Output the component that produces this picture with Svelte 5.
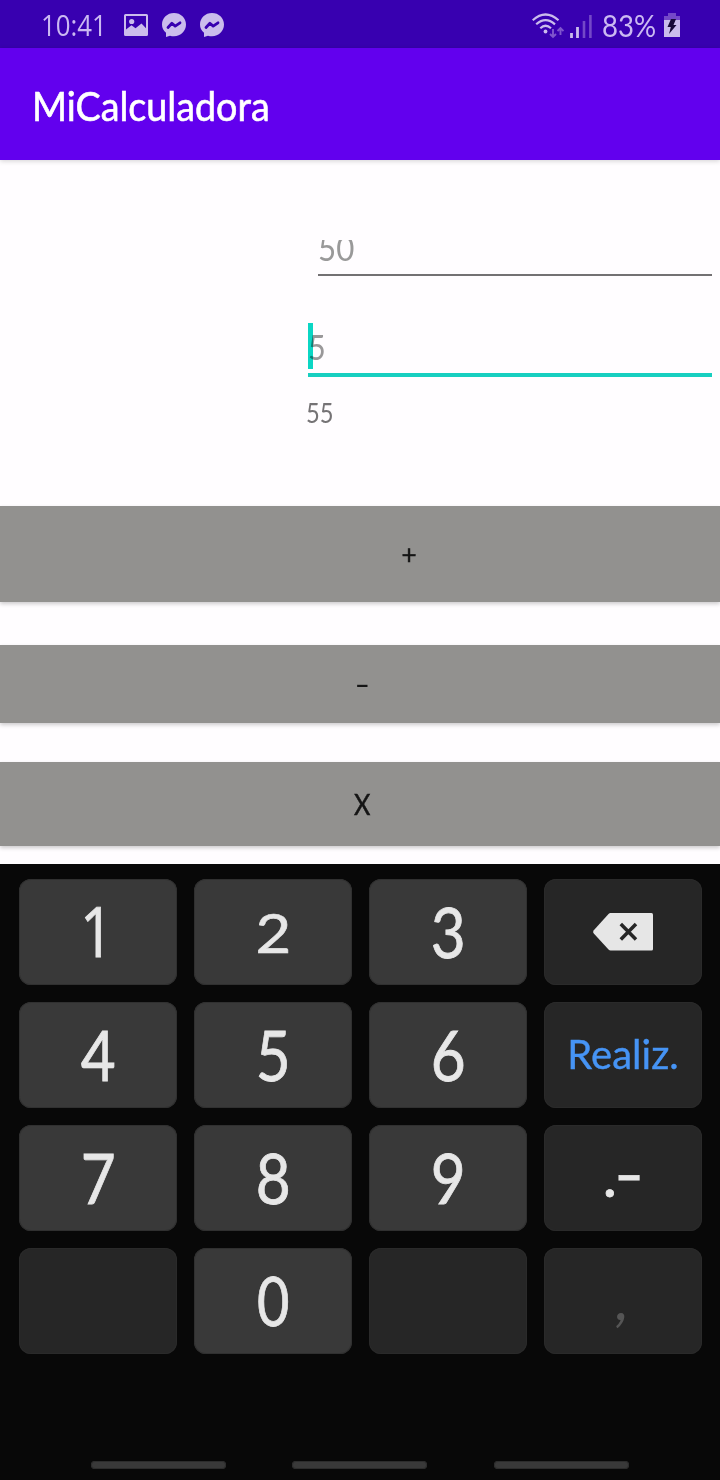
<script>
  const keys = [
    { t: '1', cls: 'one' }, { t: '2', cls: 'short' }, { t: '3' }, { icon: true, dark: true },
    { t: '4' }, { t: '5' }, { t: '6' }, { t: 'Realiz.', dark: true, cls: 'action' },
    { t: '7' }, { t: '8' }, { t: '9' }, { t: '.-', dark: true, cls: 'punct' },
    { t: '', dark: true }, { t: '0', cls: 'zero' }, { t: '', dark: true }, { t: ',', dark: true, cls: 'comma' }
  ];
</script>

{#snippet messenger()}
  <svg class="msg" width="24" height="24" viewBox="0 0 24 24">
    <path fill="#cbbcec" d="M12 0C5.2 0 0 4.9 0 11.5c0 3.3 1.4 6.200 4 8.300V24l4-1.300c1.300.4 2.600.5 4 .5 6.800 0 12-5.100 12-11.700S18.800 0 12 0z" />
    <path fill="none" stroke="#3800b0" stroke-width="2.800" stroke-linejoin="round" stroke-linecap="round" d="M6 14.500 9.900 10.300 13.200 13.100 18 9.800" />
  </svg>
{/snippet}

<div class="screen">
  <header class="status">
    <span class="time"><span class="fit">10:41</span></span>
    <svg class="photo" width="24" height="22" viewBox="0 0 24 22">
      <path fill="#cbbcec" fill-rule="evenodd" d="M1.500 0h21A1.500 1.500 0 0 1 24 1.500v19a1.500 1.500 0 0 1-1.500 1.500h-21A1.500 1.500 0 0 1 0 20.500v-19A1.500 1.500 0 0 1 1.500 0zM2 2v13.500l5.500-4.300 4 3 6-4.700 4.500 4.800V2z" />
      <circle cx="7.700" cy="7.500" r="2.600" fill="#cbbcec" />
    </svg>
    {@render messenger()}
    {@render messenger()}
    <span class="grow"></span>
    <svg class="wifi" width="32" height="26" viewBox="0 0 32 26">
      <g fill="none" stroke="#cbbcec" stroke-width="2.200">
        <path d="M.7 7.300Q13.500-4.300 26.500 7.300" />
        <path d="M4.200 11.300Q13.500 3 23 11.300" />
        <path d="M8.300 15.200Q13.500 10.300 19 15.200" />
      </g>
      <circle cx="13.500" cy="18.500" r="1.900" fill="#cbbcec" />
      <path d="M21 16v8M18 21l3 3 3-3M28.500 22v-7.500M25.500 18l3-3 3 3" fill="none" stroke="#7f55cc" stroke-width="1.900" />
    </svg>
    <svg class="signal" width="22" height="23" viewBox="0 0 22 23">
      <path d="M1.500 18v5M7.500 12v11" stroke="#cbbcec" stroke-width="2.800" />
      <path d="M14 6v17M20.400 0v23" stroke="#7448c8" stroke-width="2.600" />
    </svg>
    <span class="pct"><span class="fit">83%</span></span>
    <svg class="battery" width="16" height="24" viewBox="0 0 16 24">
      <path d="M4 0h8v3h4v4H0V3h4z" fill="#7448c8" />
      <path d="M0 7h16v17H0z" fill="#cbbcec" />
      <path d="M7 6h5L9.500 12H12.500L5 21l1.800-7H3.500z" fill="#180a38" />
    </svg>
  </header>

  <div class="appbar"><h1 class="fit">MiCalculadora</h1></div>

  <main>
    <div class="field first"><span class="fit">50</span></div>
    <div class="field second"><i class="caret"></i><span class="fit">5</span></div>
    <div class="result"><span class="fit">55</span></div>
    <button class="op plus"><span class="fit">+</span></button>
    <button class="op minus"><span class="fit">-</span></button>
    <button class="op times"><span class="fit">X</span></button>
  </main>

  <section class="keyboard">
    <div class="keys">
      {#each keys as k}
        <button class="key {k.cls ?? ''}" class:dark={k.dark}>
          {#if k.icon}
            <svg width="60" height="38" viewBox="0 0 60 38">
              <path fill="#e6e6e6" d="M17.500 0H58.500A1.500 1.500 0 0 1 60 1.500V36a1.500 1.500 0 0 1-1.500 1.500H17.500Q16.500 37.500 15.500 36.500L.8 20.500Q-.5 19 .8 17.200L15.500 1Q16.500 0 17.500 0z" />
              <path d="M27.800 11 43 26.500M43 11 27.800 26.500" stroke="#262626" stroke-width="3.500" />
            </svg>
          {:else if k.cls === 'punct'}
            <span class="fit">.</span><span class="fit dash">-</span>
          {:else}
            <span class="fit">{k.t}</span>
          {/if}
        </button>
      {/each}
    </div>
    <div class="nav"><i></i><i></i><i></i></div>
  </section>
</div>

<style>
  :global(body) { background: #080808; }
  .screen {
    width: 720px; height: 1480px; overflow: hidden;
    display: flex; flex-direction: column;
    font-family: Lato, "Open Sans", sans-serif;
    background: #fffdff;
  }
  .fit { display: inline-block; white-space: nowrap; transform-origin: 0 50%; }
  button { border: 0; margin: 0; padding: 0; font: inherit; color: inherit; }
  .status {
    height: 48px; flex: none; box-sizing: border-box; padding: 0 40px 0 42px;
    display: flex; align-items: center; background: #3800b0; color: #cbb9f2;
  }
  .time, .pct { font-size: 30px; line-height: 48px; height: 48px; box-sizing: border-box; }
  .time { width: 82px; font-family: "Open Sans", sans-serif; padding-top: 1px; }
  .time .fit { transform: translateX(-1px) scaleX(.86); }
  .pct { width: 62px; padding-top: 1px; }
  .pct .fit { transform: scaleX(.92); }
  .photo { margin-top: 2px; }
  .msg { margin: 2px 0 0 14px; }
  .grow { flex: 1; }
  .wifi { margin: 4px 6px 0 0; }
  .signal { margin: 4px 10px 0 0; }
  .battery { margin-top: 2px; }
  .appbar {
    height: 112px; flex: none; background: #6200ee; color: #fff;
    box-sizing: border-box; padding: 0 32px; display: flex; align-items: center;
    box-shadow: 0 1px 5px rgba(0,0,0,.18); z-index: 1;
  }
  h1 { margin: 3px 0 0; font-size: 40px; line-height: 48px; font-weight: 400; transform: scaleX(.943); -webkit-text-stroke: .6px #fff; }
  main { height: 704px; flex: none; display: flex; flex-direction: column; padding-top: 80px; box-sizing: border-box; }
  .field { color: #999; font-size: 34px; box-sizing: border-box; flex: none; }
  .first { height: 36px; margin: 0 8px 0 318px; border-bottom: 2px solid #737173; overflow: hidden; line-height: 40px; }
  .first .fit { transform: translateY(-12px) scaleX(.92); }
  .second { height: 54px; margin: 47px 8px 0 308px; border-bottom: 4px solid #18cfc0; display: flex; line-height: 46px; }
  .second .fit { margin-left: -5px; transform: scaleX(.9); margin-top: 1px; mix-blend-mode: multiply; }
  .caret { width: 5px; height: 46px; background: #0bd6c4; flex: none; }
  .first, .first .fit { line-height: 40px; }
  .result { height: 129px; flex: none; margin-left: 306px; font-size: 27px; line-height: 36px; color: #757375; box-sizing: border-box; padding-top: 18px; }
  .result .fit { transform: scaleX(.88); }
  .op {
    flex: none; width: 720px; background: #92918f; color: #151515; font-size: 28px;
    display: flex; align-items: center; justify-content: center;
    box-shadow: 0 2px 4px rgba(0,0,0,.2); -webkit-text-stroke: .5px #151515;
  }
  .op .fit { transform-origin: 50% 50%; }
  .plus { height: 96px; padding-left: 98px; font-size: 26px; }
  .minus { height: 78px; margin-top: 43px; padding-left: 4px; }
  .minus .fit { transform: scaleX(1.5); -webkit-text-stroke: 0; }
  .times { height: 84px; margin-top: 39px; padding-left: 4px; }
  .times .fit { transform: scaleX(.9); }
  .keyboard { flex: 1; background: #080808; padding: 15px 18px 0 19px; display: flex; flex-direction: column; }
  .keys { display: grid; grid-template-columns: repeat(4, 158px); grid-auto-rows: 106px; gap: 17px; }
  .key {
    background: #393939; color: #e7e7e7; border-radius: 12px; box-shadow: inset 0 0 0 1px #303030;
    display: flex; align-items: center; justify-content: center; font-size: 70px; line-height: 80px;
    -webkit-text-stroke: .8px #e7e7e7;
  }
  .key .fit { transform: translateY(-1px) scaleX(.86); transform-origin: 50% 50%; }
  .key.one { font-family: "Open Sans", sans-serif; font-size: 69px; }
  .key.one .fit { transform: translate(-1px, -2px) scaleX(.85); }
  .key.short .fit { transform: scale(.88, .78); }
  .key.zero .fit { transform: translateY(-1px) scale(.8, .96); }
  .key.dark { background: #262626; box-shadow: inset 0 0 0 1px #2a2a2a; }
  .key.action { color: #4694f5; font-size: 40px; -webkit-text-stroke: .4px #4694f5; }
  .key.action .fit { transform: translateY(-1px); }
  .key.punct { font-size: 60px; }
  .key.punct .fit { transform: translate(-2px, -4px); }
  .key.punct .dash { transform: translate(-1px, -5px) scaleX(1.35); }
  .key.comma { color: #555; font-size: 60px; -webkit-text-stroke: 0; }
  .key.comma .fit { transform: translateY(-4px) skewX(-6deg); }
  .nav { display: flex; gap: 66.500px; margin: 107px 0 0 71.900px; }
  .nav i { width: 135px; height: 8px; border-radius: 4px; background: #393939; box-shadow: inset 0 0 0 1px #2c2c2c; }
</style>
